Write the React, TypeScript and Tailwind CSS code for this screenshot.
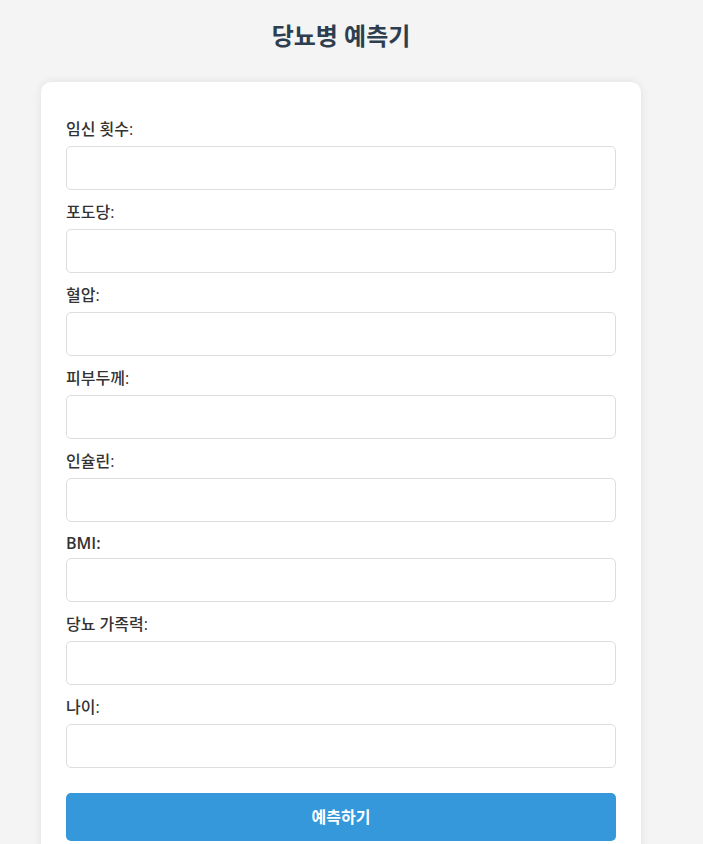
import React from "react";

type Field = { label: string; cls: string };

const fields: Field[] = [
  { label: "임신 횟수:", cls: "leading-[23px] font-medium" },
  { label: "포도당:", cls: "leading-[23px] font-medium" },
  { label: "혈압:", cls: "leading-[23px] font-medium" },
  { label: "피부두께:", cls: "leading-[23px] font-medium" },
  { label: "인슐린:", cls: "leading-[23px] font-medium" },
  { label: "BMI:", cls: "leading-[20px] font-semibold" },
  { label: "당뇨 가족력:", cls: "leading-[23px] font-medium" },
  { label: "나이:", cls: "leading-[23px] font-medium" },
];

export default function App() {
  return (
    <div
      className="min-h-screen bg-[#f4f4f4]"
      style={{ fontFamily: '"Open Sans", "Noto Sans CJK KR", sans-serif' }}
    >
      <div className="w-[682px] flex flex-col items-center pt-[18px] pb-10">
        <h1 className="text-[24px] leading-[35px] font-bold text-[#2c3e50]">당뇨병 예측기</h1>
        <form
          className="mt-[29px] w-[600px] bg-white rounded-[10px] shadow-[0_0_10px_rgba(0,0,0,0.08)] px-[25px] pt-[36px] pb-[25px] flex flex-col gap-[11px]"
          onSubmit={(e) => e.preventDefault()}
        >
          {fields.map((f) => (
            <div key={f.label} className="flex flex-col">
              <label className={`text-[16px] text-[#333] mb-[5px] ${f.cls}`}>{f.label}</label>
              <input
                type="text"
                className="h-[44px] w-full rounded-[5px] border border-[#dddddd] bg-white px-3 outline-none"
              />
            </div>
          ))}
          <button
            type="submit"
            className="mt-[14px] h-[48px] w-full rounded-[5px] bg-[#3498db] text-white text-[16px] font-bold"
          >
            예측하기
          </button>
        </form>
      </div>
    </div>
  );
}
